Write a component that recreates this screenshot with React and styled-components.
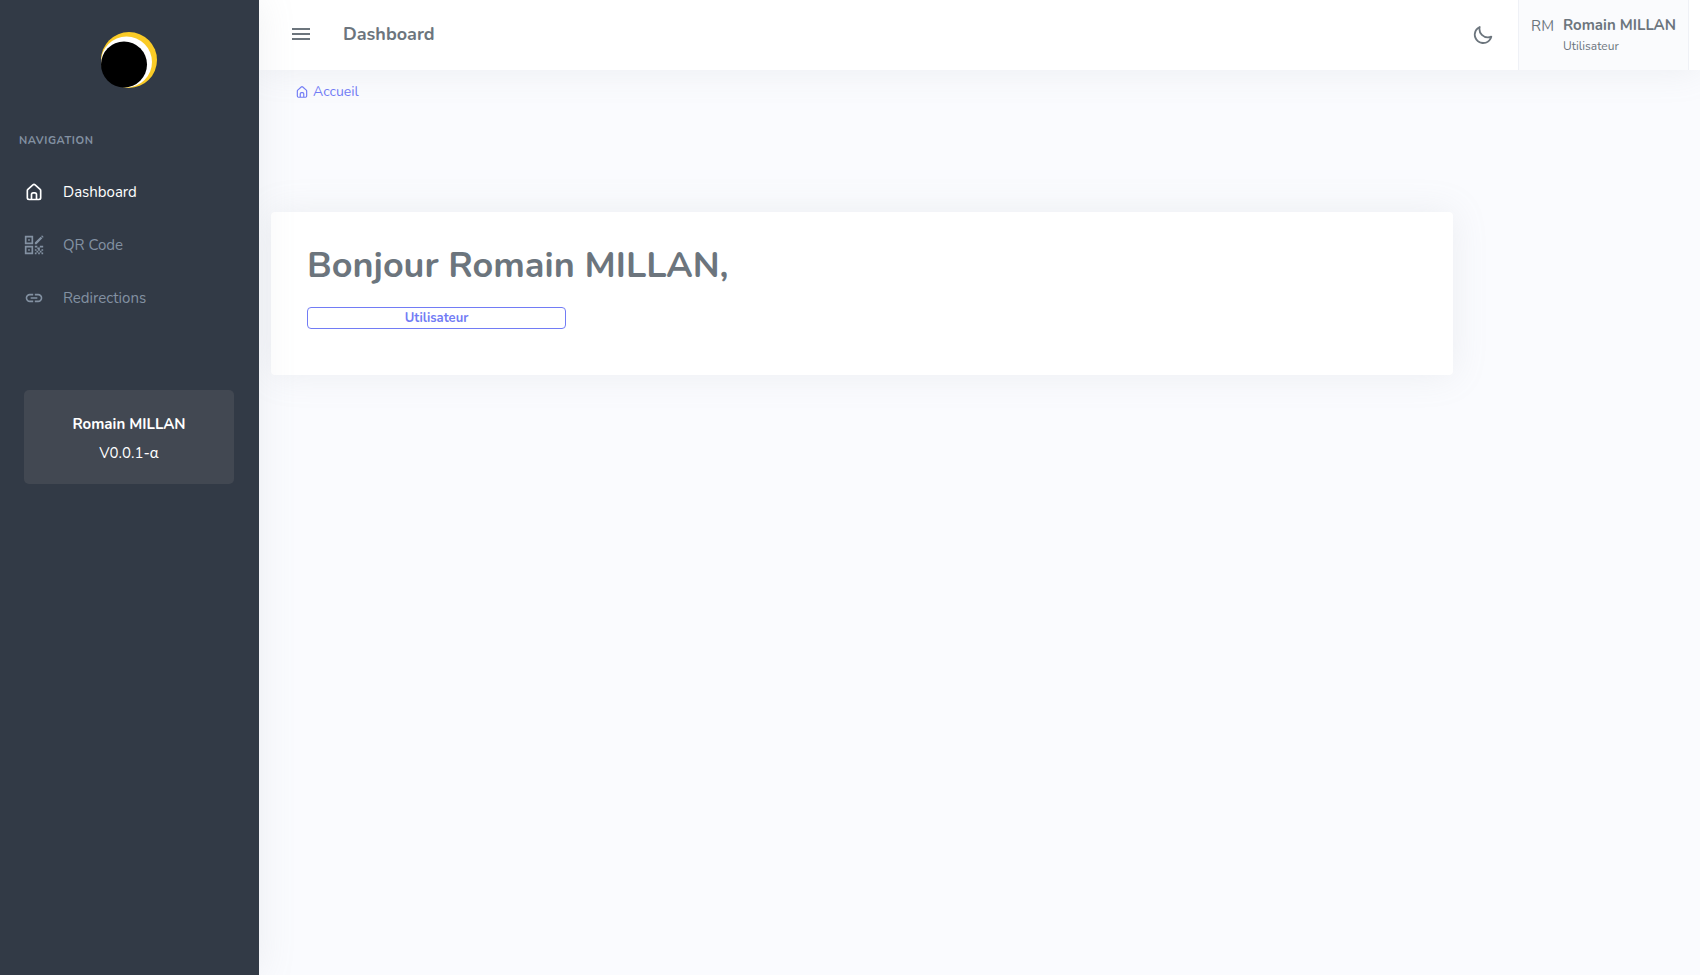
import React from "react";
import styled, { createGlobalStyle } from "styled-components";

const GlobalStyle = createGlobalStyle`
  *, *::before, *::after { box-sizing: border-box; }
  body {
    margin: 0;
    background: #fafbfe;
    color: #6c757d;
    font-family: Nunito, Lato, "Open Sans", sans-serif;
    font-size: 14px;
    line-height: 24px;
  }
`;

const Layout = styled.div`
  display: flex;
  min-height: 100vh;
`;

const Sidebar = styled.aside`
  flex: 0 0 259px;
  position: relative;
  z-index: 2;
  background: #323a46;
  box-shadow: 0 0 35px rgba(154, 161, 171, 0.15);
`;

const LogoLink = styled.a`
  display: flex;
  justify-content: center;
  padding: 32px 2px 25px 0;
  svg { display: block; }
`;

const NavTitle = styled.h2`
  margin: 0;
  padding: 16px 19px 12px;
  color: #8391a2;
  font-size: 11px;
  font-weight: 700;
  line-height: 24px;
  letter-spacing: 0.05em;
  text-transform: uppercase;
`;

const NavList = styled.ul`
  margin: 0;
  padding: 0;
  list-style: none;
`;

const NavLink = styled.a`
  display: flex;
  align-items: center;
  gap: 19px;
  height: 53px;
  padding: 0 24px;
  color: ${(p) => (p.$active ? "#fff" : "#8391a2")};
  font-size: 15px;
  text-decoration: none;
`;

const VersionBox = styled.section`
  margin: 66px 25px 0 24px;
  padding: 22px 20px 19px;
  border-radius: 5px;
  background: #424852;
  color: #fff;
  text-align: center;
`;

const VersionName = styled.h3`
  margin: 0;
  padding-bottom: 5px;
  font-size: 15px;
  line-height: 24px;
  font-weight: 700;
`;

const VersionText = styled.p`
  margin: 0;
  font-size: 15px;
`;

const Main = styled.div`
  flex: 1;
  min-width: 0;
`;

const Topbar = styled.header`
  display: flex;
  align-items: center;
  height: 70px;
  padding: 0 11px 0 30px;
  background: #fff;
  box-shadow: 0 0 35px rgba(154, 161, 171, 0.15);
`;

const IconButton = styled.button`
  display: flex;
  padding: 0;
  border: 0;
  background: none;
  color: #6c757d;
  cursor: pointer;
`;

const PageTitle = styled.h4`
  flex: 1;
  margin: 0 0 0 30px;
  padding-bottom: 2px;
  font-size: 18px;
  font-weight: 700;
`;

const UserButton = styled.button`
  display: flex;
  gap: 9px;
  height: 70px;
  margin-left: 24px;
  padding: 14px 12px;
  border: 1px solid #eff1f6;
  border-width: 0 1px;
  background: #fafbfd;
  color: #6c757d;
  font: inherit;
  text-align: left;
  cursor: pointer;
`;

const UserText = styled.span`
  display: flex;
  flex-direction: column;
`;

const UserName = styled.strong`
  font-size: 15px;
  line-height: 22px;
`;

const UserRole = styled.span`
  font-size: 12px;
  line-height: 20px;
`;

const Initials = styled.span`
  font-size: 15px;
  line-height: 24px;
`;

const Content = styled.main`
  padding: 0 12px;
`;

const Breadcrumb = styled.nav`
  height: 142px;
  padding: 10px 24px;
`;

const CrumbLink = styled.a`
  display: inline-flex;
  align-items: center;
  gap: 4px;
  color: #727cf5;
  text-decoration: none;
`;

const Card = styled.section`
  width: 83.4%;
  padding: 32px 36px 46px;
  border-radius: 4px;
  background: #fff;
  box-shadow: 0 0 35px rgba(154, 161, 171, 0.15);
`;

const Greeting = styled.h1`
  margin: 0;
  padding-bottom: 19px;
  font-size: 36px;
  line-height: 44px;
  font-weight: 700;
`;

const Badge = styled.span`
  display: block;
  width: 259px;
  border: 1px solid #727cf5;
  border-radius: 4px;
  color: #727cf5;
  font-size: 13px;
  font-weight: 700;
  line-height: 20px;
  text-align: center;
`;

const Svg = ({ size, children }) => (
  <svg width={size} height={size} viewBox="0 0 24 24" fill="currentColor" aria-hidden="true">
    {children}
  </svg>
);

const HomeIcon = ({ size = 20 }) => (
  <Svg size={size}>
    <path d="M20,8h0L14,2.74a3,3,0,0,0-4,0L4,8a3,3,0,0,0-1,2.26V19a3,3,0,0,0,3,3H18a3,3,0,0,0,3-3V10.25A3,3,0,0,0,20,8ZM14,20H10V15a1,1,0,0,1,1-1h2a1,1,0,0,1,1,1Zm5-1a1,1,0,0,1-1,1H16V15a3,3,0,0,0-3-3H11a3,3,0,0,0-3,3v5H6a1,1,0,0,1-1-1V10.25a1,1,0,0,1,.34-.75l6-5.25a1,1,0,0,1,1.32,0l6,5.25a1,1,0,0,1,.34.75Z" />
  </Svg>
);

const QrIcon = () => (
  <Svg size={20}>
    <path
      fillRule="evenodd"
      d="M1 1h10v10H1zM3 3v6h6V3zM5 5h2v2H5zM1 13h10v10H1zM3 15v6h6v-6zM5 17h2v2H5zM13 9l7-7 2 2-7 7h-2zM20.600 1.400l1-1 2 2-1 1zM13 13h3v2h-3zM16 15h3v2h-3zM19 13h4v2h-4zM13 17h2v2h-2zM17 17h2v2h-2zM21 17h2v2h-2zM15 19h2v2h-2zM19 19h2v2h-2zM13 21h2v2h-2zM17 21h2v2h-2zM21 21h2v2h-2z"
    />
  </Svg>
);

const LinkIcon = () => (
  <Svg size={20}>
    <path d="M3.900,12C3.900,10.290 5.290,8.900 7,8.900H11V7H7A5,5 0 0,0 2,12A5,5 0 0,0 7,17H11V15.100H7C5.290,15.100 3.900,13.710 3.900,12M8,13H16V11H8V13M17,7H13V8.900H17C18.710,8.900 20.100,10.290 20.100,12C20.100,13.710 18.710,15.100 17,15.100H13V17H17A5,5 0 0,0 22,12A5,5 0 0,0 17,7Z" />
  </Svg>
);

const MenuIcon = () => (
  <Svg size={24}>
    <path d="M3 5h18v2H3zM3 10h18v2H3zM3 15h18v2H3z" />
  </Svg>
);

const MoonIcon = () => (
  <Svg size={22}>
    <path d="M21.640,13a1,1,0,0,0-1.050-.140,8.050,8.050,0,0,1-3.370.730A8.150,8.150,0,0,1,9.080,5.490a8.590,8.590,0,0,1,.250-2A1,1,0,0,0,8,2.360,10.140,10.140,0,1,0,22,14.050,1,1,0,0,0,21.640,13Zm-9.500,6.690A8.140,8.140,0,0,1,7.080,5.220v.270A10.150,10.150,0,0,0,17.220,15.630a9.790,9.790,0,0,0,2.100-.220A8.110,8.110,0,0,1,12.140,19.690Z" />
  </Svg>
);

const Logo = () => (
  <svg width="56" height="56" viewBox="1 1 56 56" role="img" aria-label="Logo">
    <defs>
      <clipPath id="sun"><circle cx="29" cy="29" r="28" /></clipPath>
    </defs>
    <circle cx="29" cy="29" r="28" fill="#facb26" />
    <circle cx="26.500" cy="31" r="25.500" fill="#fff" clipPath="url(#sun)" />
    <circle cx="24" cy="33.500" r="23" fill="#000" />
  </svg>
);

const navItems = [
  { label: "Dashboard", Icon: HomeIcon, active: true },
  { label: "QR Code", Icon: QrIcon },
  { label: "Redirections", Icon: LinkIcon },
];

export default function App() {
  return (
    <>
      <GlobalStyle />
      <Layout>
        <Sidebar>
          <LogoLink href="#"><Logo /></LogoLink>
          <nav aria-label="Navigation">
            <NavTitle>Navigation</NavTitle>
            <NavList>
              {navItems.map(({ label, Icon, active }) => (
                <li key={label}>
                  <NavLink href="#" $active={active} aria-current={active ? "page" : undefined}>
                    <Icon />
                    {label}
                  </NavLink>
                </li>
              ))}
            </NavList>
          </nav>
          <VersionBox>
            <VersionName>Romain MILLAN</VersionName>
            <VersionText>V0.0.1-α</VersionText>
          </VersionBox>
        </Sidebar>
        <Main>
          <Topbar>
            <IconButton type="button" aria-label="Menu"><MenuIcon /></IconButton>
            <PageTitle>Dashboard</PageTitle>
            <IconButton type="button" aria-label="Thème"><MoonIcon /></IconButton>
            <UserButton type="button">
              <Initials>RM</Initials>
              <UserText>
                <UserName>Romain MILLAN</UserName>
                <UserRole>Utilisateur</UserRole>
              </UserText>
            </UserButton>
          </Topbar>
          <Content>
            <Breadcrumb aria-label="Fil d'Ariane">
              <CrumbLink href="#"><HomeIcon size={14} />Accueil</CrumbLink>
            </Breadcrumb>
            <Card>
              <Greeting>Bonjour Romain MILLAN,</Greeting>
              <Badge>Utilisateur</Badge>
            </Card>
          </Content>
        </Main>
      </Layout>
    </>
  );
}
